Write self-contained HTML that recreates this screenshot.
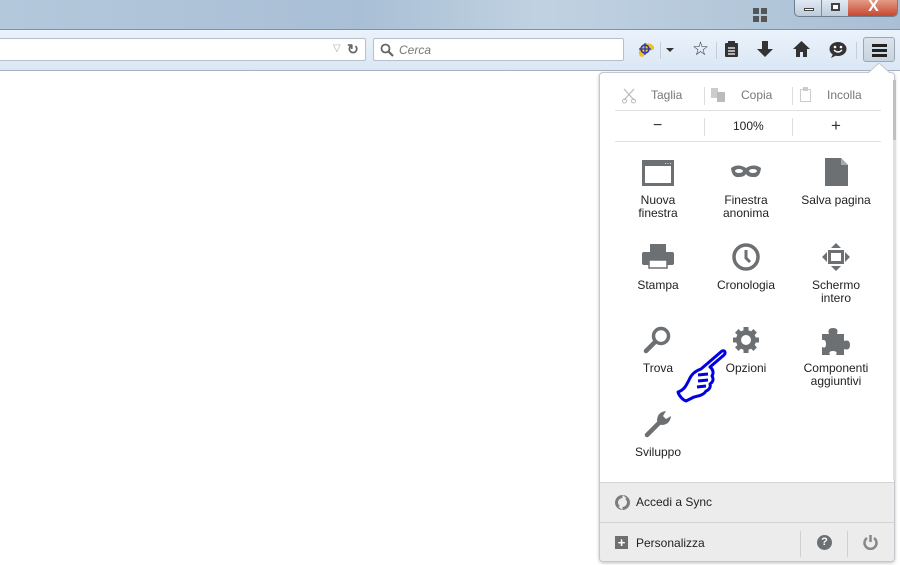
<!DOCTYPE html>
<html><head><meta charset="utf-8"><style>
*{margin:0;padding:0;box-sizing:border-box}
body{width:900px;height:565px;overflow:hidden;background:#fff;font-family:"Liberation Sans",sans-serif;font-size:12px;color:#222;position:relative}
.title{position:absolute;left:0;top:0;width:900px;height:30px;background:linear-gradient(90deg,#b4c8dc,#a9bfd5 40%,#c0d2e2 60%,#aabfd4);border-bottom:1px solid #7d93a8}
.tb{position:absolute;left:0;top:30px;width:900px;height:41px;background:linear-gradient(#eaf2fb,#dbe7f5);border-bottom:1px solid #a6b3c0}
.url{position:absolute;left:-2px;top:8px;width:368px;height:23px;background:#fff;border:1px solid #b5c0cc;border-radius:2px}
.srch{position:absolute;left:373px;top:8px;width:251px;height:23px;background:#fff;border:1px solid #b5c0cc;border-radius:2px}
.srch span{position:absolute;left:25px;top:4px;font-style:italic;color:#777;font-size:12px}
.panel{position:absolute;left:599px;top:72px;width:296px;height:490px;background:#fff;border:1px solid #c4c8cc;border-radius:4px;box-shadow:0 1px 3px rgba(0,0,0,.25);overflow:hidden}
.row1{position:absolute;left:15px;top:8px;width:266px;height:30px;border-bottom:1px solid #e2e2e2;color:#777;font-size:12px}
.row2{position:absolute;left:15px;top:39px;width:266px;height:30px;border-bottom:1px solid #e2e2e2;font-size:12px}
.sep{position:absolute;top:6px;width:1px;height:18px;background:#ddd}
.item{position:absolute;width:88px;text-align:center;font-size:12px;line-height:13px;color:#222}
.item svg{display:block;margin:0 auto 8px}
.foot1{position:absolute;left:0;top:409px;width:296px;height:40px;background:#ececec;border-top:1px solid #d4d4d4}
.foot2{position:absolute;left:0;top:449px;width:296px;height:41px;background:#ececec;border-top:1px solid #d4d4d4}
</style></head><body>
<div class="title">
 <svg style="position:absolute;left:753px;top:8px" width="14" height="14"><rect x="0" y="0" width="6" height="6" fill="#555"/><rect x="8" y="0" width="6" height="6" fill="#555"/><rect x="0" y="8" width="6" height="6" fill="#555"/><rect x="8" y="8" width="6" height="6" fill="#555"/></svg>
 <div style="position:absolute;left:794px;top:-1px;width:104px;height:18px;border:1px solid #6e7f93;border-top:none;border-radius:0 0 5px 5px;overflow:hidden;background:linear-gradient(#e3ebf4,#bccbdb)">
  <div style="position:absolute;left:0;top:0;width:27px;height:18px;border-right:1px solid #7d8ea3"><div style="position:absolute;left:9px;top:9px;width:10px;height:3px;background:#fff;border:1px solid #444"></div></div>
  <div style="position:absolute;left:27px;top:0;width:26px;height:18px"><div style="position:absolute;left:9px;top:4px;width:9px;height:8px;border:2px solid #444;background:#fff"></div></div>
  <div style="position:absolute;left:53px;top:0;width:51px;height:18px;background:linear-gradient(#e5a08c,#c6422a);color:#fff;font-weight:bold;font-size:16px;text-align:center;line-height:16px">X</div>
 </div>
</div>
<div class="tb">
 <div class="url"><span style="position:absolute;left:334px;top:4px;color:#aaa;font-size:10px">▽</span><span style="position:absolute;left:348px;top:2px;color:#666;font-size:14px;font-weight:bold">↻</span></div>
 <div class="srch"><svg style="position:absolute;left:6px;top:4px" width="14" height="14"><circle cx="5.5" cy="5.5" r="4" fill="none" stroke="#666" stroke-width="1.8"/><path d="M8.5 8.5L13 13" stroke="#666" stroke-width="2.2"/></svg><span>Cerca</span></div>
 <svg style="position:absolute;left:636px;top:10px" width="20" height="20"><path d="M4 8c2-6 12-6 14-1 1 3-3 4-6 3-2 4-5 9-8 6-2-2-1-5 0-8z" fill="#f2c21b"/><circle cx="9" cy="9" r="4" fill="none" stroke="#2235c0" stroke-width="1.5"/><path d="M9 3v12M3 9h12" stroke="#2235c0" stroke-width="1.2"/></svg>
 <div style="position:absolute;left:660px;top:12px;width:1px;height:17px;background:#c5ced8"></div>
 <div style="position:absolute;left:666px;top:18px;border:4px solid transparent;border-top:4px solid #333"></div>
 <div style="position:absolute;left:692px;top:8px;color:#333;font-size:19px">☆</div>
 <div style="position:absolute;left:716px;top:12px;width:1px;height:17px;background:#c5ced8"></div>
 <svg style="position:absolute;left:724px;top:11px" width="15" height="17"><rect x="1" y="2" width="13" height="14" rx="1" fill="#333"/><rect x="4" y="0" width="7" height="4" fill="#333"/><path d="M4 7h7M4 10h7M4 13h7" stroke="#fff" stroke-width="1.3"/></svg>
 <svg style="position:absolute;left:757px;top:11px" width="16" height="17"><rect x="5" y="0" width="6" height="8" fill="#333"/><path d="M0 8h16L8 16z" fill="#333"/></svg>
 <svg style="position:absolute;left:793px;top:11px" width="17" height="16"><path d="M8.5 0L17 8h-3v8H10v-5H7v5H3V8H0z" fill="#333"/></svg>
 <svg style="position:absolute;left:829px;top:11px" width="18" height="17"><ellipse cx="9" cy="8" rx="8.5" ry="7" fill="#333"/><path d="M4 13l-2 4 6-3z" fill="#333"/><circle cx="6" cy="6" r="1.3" fill="#fff"/><circle cx="12" cy="6" r="1.3" fill="#fff"/><path d="M5 9q4 4 8 0" stroke="#fff" stroke-width="1.3" fill="none"/></svg>
 <div style="position:absolute;left:856px;top:12px;width:1px;height:17px;background:#c5ced8"></div>
 <div style="position:absolute;left:863px;top:7px;width:32px;height:25px;border:1px solid #9aa8b6;border-radius:3px;background:linear-gradient(#dbe3ec,#c8d3df)">
  <div style="position:absolute;left:8px;top:6px;width:15px;height:2.5px;background:#222"></div>
  <div style="position:absolute;left:8px;top:11px;width:15px;height:2.5px;background:#222"></div>
  <div style="position:absolute;left:8px;top:16px;width:15px;height:2.5px;background:#222"></div>
 </div>
</div>
<svg style="position:absolute;left:868px;top:63px;z-index:3" width="22" height="11"><path d="M0 10L11 0l11 10" fill="#fff" stroke="#c4c8cc"/></svg>
<div class="panel">
 <div class="row1">
  <svg style="position:absolute;left:7px;top:7px" width="14" height="16"><path d="M2 1l10 11M12 1L2 12" stroke="#bbb" stroke-width="1.3"/><circle cx="2.5" cy="13" r="2" fill="none" stroke="#bbb"/><circle cx="11.5" cy="13" r="2" fill="none" stroke="#bbb"/></svg>
  <span style="position:absolute;left:36px;top:7px">Taglia</span>
  <div class="sep" style="left:89px"></div>
  <svg style="position:absolute;left:96px;top:7px" width="16" height="15"><rect x="0" y="0" width="7" height="10" fill="#ccc"/><rect x="6" y="4" width="8" height="10" fill="#bbb"/></svg>
  <span style="position:absolute;left:126px;top:7px">Copia</span>
  <div class="sep" style="left:177px"></div>
  <svg style="position:absolute;left:185px;top:6px" width="12" height="16"><rect x="0.5" y="2.5" width="10" height="12" fill="none" stroke="#ccc"/><rect x="3" y="0" width="5" height="4" fill="#ccc"/></svg>
  <span style="position:absolute;left:212px;top:7px">Incolla</span>
 </div>
 <div class="row2">
  <span style="position:absolute;left:38px;top:5px;font-size:16px;color:#333">−</span>
  <div class="sep" style="left:89px"></div>
  <span style="position:absolute;left:118px;top:7px">100%</span>
  <div class="sep" style="left:177px"></div>
  <span style="position:absolute;left:216px;top:4px;font-size:17px;color:#333">+</span>
 </div>
 <div class="item" style="left:14px;top:87px"><svg width="32" height="26"><rect x="1.5" y="1.5" width="29" height="23" fill="#fff" stroke="#6d7073" stroke-width="3"/><rect x="1" y="1" width="30" height="5" fill="#6d7073"/><path d="M23 3.5h1M25.5 3.5h1M28 3.5h1" stroke="#ddd"/></svg>Nuova<br>finestra</div>
 <div class="item" style="left:102px;top:87px"><svg width="32" height="26"><path d="M1 8q7-5 15 0 8-5 15 0-1 10-8 9-5 0-7-3-2 3-7 3-7 1-8-9z" fill="#6d7073"/><ellipse cx="9" cy="11" rx="4" ry="2" fill="#fff"/><ellipse cx="23" cy="11" rx="4" ry="2" fill="#fff"/></svg>Finestra<br>anonima</div>
 <div class="item" style="left:192px;top:87px"><svg width="32" height="26" style="margin-top:-2px;height:28px"><path d="M5 0h16l7 7v21H5z" fill="#6d7073"/><path d="M21 0v7h7" fill="#a7aaad"/></svg>Salva pagina</div>
 <div class="item" style="left:14px;top:170px"><svg width="34" height="28"><rect x="9" y="1" width="16" height="8" fill="#6d7073"/><rect x="1" y="9" width="32" height="13" rx="2" fill="#6d7073"/><rect x="8" y="17" width="18" height="8" fill="#fff" stroke="#6d7073" stroke-width="1.5"/></svg>Stampa</div>
 <div class="item" style="left:102px;top:170px"><svg width="30" height="28"><circle cx="15" cy="14" r="12" fill="none" stroke="#6d7073" stroke-width="3.5"/><path d="M15 7v8l4 4" stroke="#6d7073" stroke-width="3" fill="none"/></svg>Cronologia</div>
 <div class="item" style="left:192px;top:170px"><svg width="30" height="28"><path d="M15 0l5 5H10zM15 28l5-5H10zM1 14l5-5v10zM29 14l-5-5v10z" fill="#6d7073"/><rect x="8.5" y="8.5" width="13" height="11" fill="none" stroke="#6d7073" stroke-width="3"/></svg>Schermo<br>intero</div>
 <div class="item" style="left:14px;top:253px"><svg width="30" height="28"><circle cx="18" cy="10" r="7.5" fill="none" stroke="#6d7073" stroke-width="3.5"/><path d="M12 16L3 25" stroke="#6d7073" stroke-width="4.5" stroke-linecap="round"/></svg>Trova</div>
 <div class="item" style="left:102px;top:253px"><svg width="30" height="28"><g transform="translate(15 14)" fill="#6d7073"><circle r="10"/><g id="t"><rect x="-2.5" y="-13" width="5" height="5"/></g><use href="#t" transform="rotate(45)"/><use href="#t" transform="rotate(90)"/><use href="#t" transform="rotate(135)"/><use href="#t" transform="rotate(180)"/><use href="#t" transform="rotate(225)"/><use href="#t" transform="rotate(270)"/><use href="#t" transform="rotate(315)"/><circle r="5" fill="#fff"/></g></svg>Opzioni</div>
 <div class="item" style="left:192px;top:253px"><svg width="32" height="30" style="margin-bottom:6px"><path d="M2 8h7q-2-6 4-6t4 6h7v7q6-2 6 4t-6 4v6h-8q2-4-3-4t-3 4H2v-8q4 2 4-3T2 14z" fill="#6d7073"/></svg>Componenti<br>aggiuntivi</div>
 <div class="item" style="left:14px;top:336px"><svg width="30" height="30" style="margin-bottom:7px"><path d="M4 26L16 14" stroke="#6d7073" stroke-width="4.5" stroke-linecap="round"/><path d="M14 12q0-9 9-10l-3 5 3 3 5-3q-1 9-10 9z" fill="#6d7073"/></svg>Sviluppo</div>
 <div class="foot1">
  <svg style="position:absolute;left:15px;top:12px" width="15" height="15"><circle cx="7.5" cy="7.5" r="6" fill="none" stroke="#7a7d80" stroke-width="3"/><path d="M7.5 0l4 3-4 3zM7.5 15l-4-3 4-3z" fill="#ececec"/></svg>
  <span style="position:absolute;left:36px;top:12px">Accedi a Sync</span>
 </div>
 <div class="foot2">
  <div style="position:absolute;left:15px;top:13px;width:13px;height:13px;background:#6d7073;color:#fff;font-weight:bold;font-size:13px;line-height:13px;text-align:center">+</div>
  <span style="position:absolute;left:36px;top:13px">Personalizza</span>
  <div style="position:absolute;left:200px;top:8px;width:1px;height:26px;background:#d0d0d0"></div>
  <div style="position:absolute;left:217px;top:12px;width:15px;height:15px;border-radius:50%;background:#6d7073;color:#fff;font-weight:bold;font-size:11px;line-height:15px;text-align:center">?</div>
  <div style="position:absolute;left:247px;top:8px;width:1px;height:26px;background:#d0d0d0"></div>
  <svg style="position:absolute;left:263px;top:11px" width="15" height="16"><path d="M4 4a6 6 0 1 0 7 0" fill="none" stroke="#888" stroke-width="2.5"/><path d="M7.5 1v7" stroke="#888" stroke-width="2.5"/></svg>
 </div>
</div>
<div style="position:absolute;left:893px;top:80px;width:3px;height:400px;background:#e0e0e0"></div>
<div style="position:absolute;left:893px;top:80px;width:3px;height:60px;background:#c0c0c0"></div>
<svg style="position:absolute;left:676px;top:348px;z-index:5" width="52" height="62"><path d="M46 3c3-1 4 2 2 4L34 19c3 2 4 6 2 9 2 3 1 6-2 8 1 3-1 6-4 7-2 4-8 5-12 6l-8 4c-3-1-7-5-8-9 6-2 8-6 11-12 2-5 6-9 12-11zM22 27l10-1M22 33l10-1M21 39l9-1" fill="none" stroke="#0000e0" stroke-width="3" stroke-linejoin="round"/></svg>
</body></html>
